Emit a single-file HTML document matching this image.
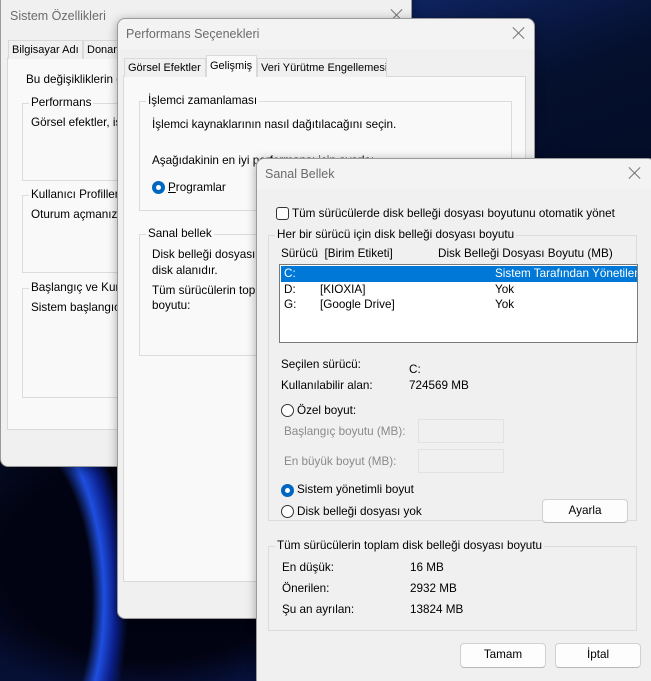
<!DOCTYPE html>
<html style="overflow:hidden;width:651px;height:681px"><head><meta charset="utf-8"><style>
*{box-sizing:border-box;margin:0;padding:0}
body{width:651px;height:681px;overflow:hidden;position:relative;font-family:"Liberation Sans",sans-serif;font-size:11.7px;color:#000;
background:radial-gradient(ellipse 120px 260px at 20px 600px,transparent 60%,#1f4fe0 70%,#0b1f8a 80%,transparent 90%),
radial-gradient(ellipse 300px 200px at 150px 560px,#020312 50%,transparent 70%),
linear-gradient(160deg,#1a3a9a 0%,#05102e 30%,#030a1f 60%,#0a1a5a 100%);}
div,span{white-space:nowrap}
.a{position:absolute}
.win{position:absolute;background:#f0f0f0;border:1px solid #9a9a9a;border-radius:8px;box-shadow:0 2px 10px rgba(0,0,0,.35);overflow:hidden}
.title{position:absolute;color:#6b6b6b;font-size:12.5px}
.x{position:absolute;width:12px;height:12px}
.x:before,.x:after{content:"";position:absolute;left:5px;top:-2px;width:1px;height:16px;background:#777;transform:rotate(45deg)}
.x:after{transform:rotate(-45deg)}
.panel{position:absolute;background:#f9f9f9;border:1px solid #d9d9d9}
.grp{position:absolute;border:1px solid #dcdcdc}
.gl{position:absolute;background:#f0f0f0;padding:0 2px;top:-8px;left:6px}
.tab{position:absolute;border:1px solid #d9d9d9;border-bottom:none;background:#f0f0f0;padding:3px 3px;height:19px;overflow:hidden;font-size:11px}
.rad{position:absolute;width:13px;height:13px;border:1px solid #333;border-radius:50%;background:#fff}
.rad.on{border:none;background:#0067c0}
.rad.on:after{content:"";position:absolute;left:4px;top:4px;width:5px;height:5px;border-radius:50%;background:#fff}
.btn{position:absolute;background:#fdfdfd;border:1px solid #d0d0d0;border-bottom-color:#b8b8b8;border-radius:4px;text-align:center;line-height:22px}
.gray{color:#8a8a8a}
.tb{position:absolute;border:1px solid #e2e2e2;background:#f0f0f0}
</style></head><body>

<div class="win" style="left:0;top:-8px;width:412px;height:475px;background:#f0f0f0"></div>
<div class="title a" style="left:10px;top:9px">Sistem Özellikleri</div>
<div class="x" style="left:391px;top:9px"></div>
<div class="panel" style="left:7px;top:57px;width:380px;height:373px"></div>
<div class="tab" style="left:8px;top:40px;width:75px">Bilgisayar Adı</div>
<div class="tab" style="left:83px;top:40px;width:50px">Donanım</div>
<div class="a" style="left:26px;top:73px">Bu değişikliklerin çoğu</div>
<div class="grp" style="left:22px;top:103px;width:320px;height:78px"><span class="gl" style="background:#f9f9f9">Performans</span></div>
<div class="a" style="left:31px;top:116px">Görsel efektler, işlemci</div>
<div class="grp" style="left:22px;top:195px;width:320px;height:78px"><span class="gl" style="background:#f9f9f9">Kullanıcı Profilleri</span></div>
<div class="a" style="left:31px;top:208px">Oturum açmanızla ilgili</div>
<div class="grp" style="left:22px;top:288px;width:320px;height:110px"><span class="gl" style="background:#f9f9f9">Başlangıç ve Kurtarma</span></div>
<div class="a" style="left:31px;top:301px">Sistem başlangıcı, sistem</div>

<div class="win" style="left:117px;top:18px;width:418px;height:601px"></div>
<div style="position:absolute;left:118px;top:19px;width:416px;height:30px;background:#f3f3f3;border-radius:8px 8px 0 0"></div>
<div class="title a" style="left:126px;top:27px">Performans Seçenekleri</div>
<div class="x" style="left:513px;top:27px"></div>
<div class="panel" style="left:123px;top:76px;width:403px;height:506px"></div>
<div class="tab" style="left:124px;top:58px;width:82px">Görsel Efektler</div>
<div class="tab" style="left:206px;top:55px;width:51px;height:22px;background:#f9f9f9;padding-top:4px">Gelişmiş</div>
<div class="tab" style="left:257px;top:58px;width:130px">Veri Yürütme Engellemesi</div>
<div class="grp" style="left:139px;top:101px;width:373px;height:110px"><span class="gl" style="background:#f9f9f9">İşlemci zamanlaması</span></div>
<div class="a" style="left:152px;top:118px">İşlemci kaynaklarının nasıl dağıtılacağını seçin.</div>
<div class="a" style="left:152px;top:154px">Aşağıdakinin en iyi performansı için ayarla:</div>
<div class="rad on" style="left:152px;top:181px"></div>
<div class="a" style="left:168px;top:181px"><u>P</u>rogramlar</div>
<div class="grp" style="left:139px;top:234px;width:373px;height:122px"><span class="gl" style="background:#f9f9f9">Sanal bellek</span></div>
<div class="a" style="left:152px;top:248px">Disk belleği dosyası,</div>
<div class="a" style="left:152px;top:264px">disk alanıdır.</div>
<div class="a" style="left:152px;top:284px">Tüm sürücülerin toplam</div>
<div class="a" style="left:152px;top:299px">boyutu:</div>

<div class="win" style="left:256px;top:158px;width:400px;height:530px"></div>
<div style="position:absolute;left:257px;top:159px;width:398px;height:30px;background:#f3f3f3;border-radius:8px 8px 0 0"></div>
<div class="title a" style="left:265px;top:167px">Sanal Bellek</div>
<div class="x" style="left:629px;top:167px"></div>
<div style="position:absolute;left:276px;top:207px;width:13px;height:13px;border:1px solid #333;border-radius:3px;background:#fff"></div>
<div class="a" style="left:292px;top:207px">Tüm sürücülerde disk belleği dosyası boyutunu otomatik yönet</div>
<div class="grp" style="left:268px;top:235px;width:369px;height:286px"><span class="gl" style="left:6px">Her bir sürücü için disk belleği dosyası boyutu</span></div>
<div class="a" style="left:281px;top:247px">Sürücü&nbsp; [Birim Etiketi]</div>
<div class="a" style="left:438px;top:247px">Disk Belleği Dosyası Boyutu (MB)</div>
<div style="position:absolute;left:279px;top:264px;width:359px;height:79px;background:#fff;border:1px solid #7a7a7a;overflow:hidden">
 <div style="position:absolute;left:1px;top:1px;width:357px;height:16px;background:#0078d7"></div>
 <div class="a" style="left:4px;top:2px;color:#fff">C:</div>
 <div class="a" style="left:215px;top:2px;color:#fff">Sistem Tarafından Yönetilen</div>
 <div class="a" style="left:4px;top:18px">D:</div><div class="a" style="left:40px;top:18px">[KIOXIA]</div><div class="a" style="left:215px;top:18px">Yok</div>
 <div class="a" style="left:4px;top:33px">G:</div><div class="a" style="left:40px;top:33px">[Google Drive]</div><div class="a" style="left:215px;top:33px">Yok</div>
</div>
<div class="a" style="left:281px;top:358px">Seçilen sürücü:</div>
<div class="a" style="left:409px;top:363px">C:</div>
<div class="a" style="left:281px;top:379px">Kullanılabilir alan:</div>
<div class="a" style="left:409px;top:379px">724569 MB</div>
<div class="rad" style="left:281px;top:404px"></div>
<div class="a" style="left:297px;top:404px">Özel boyut:</div>
<div class="a gray" style="left:284px;top:425px">Başlangıç boyutu (MB):</div>
<div class="tb" style="left:418px;top:419px;width:86px;height:24px"></div>
<div class="a gray" style="left:284px;top:455px">En büyük boyut (MB):</div>
<div class="tb" style="left:418px;top:449px;width:86px;height:24px"></div>
<div class="rad on" style="left:281px;top:484px"></div>
<div class="a" style="left:297px;top:483px">Sistem yönetimli boyut</div>
<div class="rad" style="left:281px;top:505px"></div>
<div class="a" style="left:297px;top:505px">Disk belleği dosyası yok</div>
<div class="btn" style="left:542px;top:499px;width:86px;height:24px">Ayarla</div>
<div class="grp" style="left:268px;top:546px;width:369px;height:85px"><span class="gl" style="left:6px">Tüm sürücülerin toplam disk belleği dosyası boyutu</span></div>
<div class="a" style="left:282px;top:561px">En düşük:</div><div class="a" style="left:410px;top:561px">16 MB</div>
<div class="a" style="left:282px;top:582px">Önerilen:</div><div class="a" style="left:410px;top:582px">2932 MB</div>
<div class="a" style="left:282px;top:603px">Şu an ayrılan:</div><div class="a" style="left:410px;top:603px">13824 MB</div>
<div class="btn" style="left:460px;top:643px;width:86px;height:25px">Tamam</div>
<div class="btn" style="left:555px;top:643px;width:86px;height:25px">İptal</div>
</body></html>
